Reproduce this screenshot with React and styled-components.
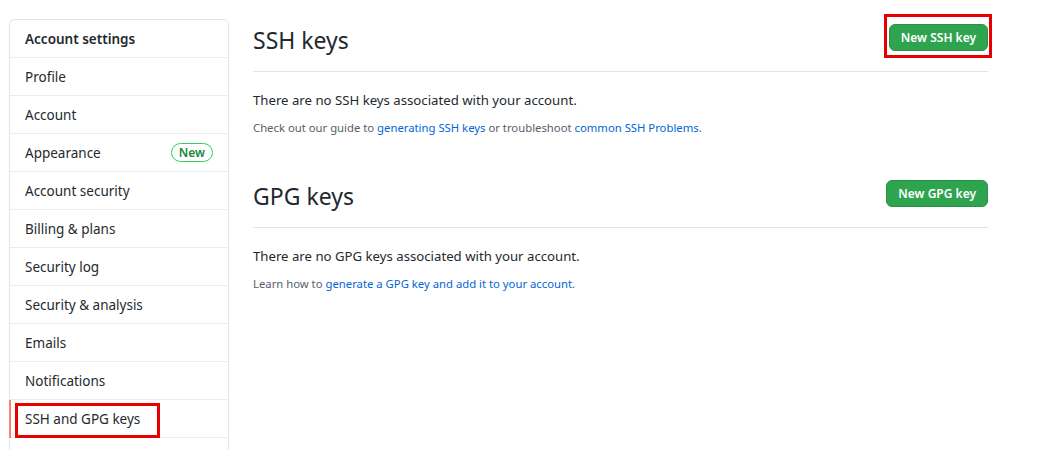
import React from "react";
import styled, { createGlobalStyle } from "styled-components";

const menu = [
    { label: "Profile" },
    { label: "Account" },
    { label: "Appearance", badge: "New" },
    { label: "Account security" },
    { label: "Billing & plans" },
    { label: "Security log" },
    { label: "Security & analysis" },
    { label: "Emails" },
    { label: "Notifications" },
    { label: "SSH and GPG keys", active: true },
];

const App = () => {
    return (
        <>
            <GlobalStyle />
            <Page>
                <Sidebar>
                    <SidebarHeader>Account settings</SidebarHeader>
                    {menu.map((item, idx) => (
                        <MenuItem key={idx} $active={item.active}>
                            <MenuLabel $marked={item.active}>{item.label}</MenuLabel>
                            {item.badge && <Badge>{item.badge}</Badge>}
                        </MenuItem>
                    ))}
                </Sidebar>
                <Main>
                    <Section>
                        <Subhead>
                            <Heading>SSH keys</Heading>
                            <ButtonWrap $marked>
                                <Button>New SSH key</Button>
                            </ButtonWrap>
                        </Subhead>
                        <Blank>There are no SSH keys associated with your account.</Blank>
                        <Note>
                            Check out our guide to <Link>generating SSH keys</Link> or troubleshoot{" "}
                            <Link>common SSH Problems</Link>.
                        </Note>
                    </Section>
                    <Section $second>
                        <Subhead>
                            <Heading>GPG keys</Heading>
                            <ButtonWrap>
                                <Button>New GPG key</Button>
                            </ButtonWrap>
                        </Subhead>
                        <Blank>There are no GPG keys associated with your account.</Blank>
                        <Note>
                            Learn how to <Link>generate a GPG key and add it to your account</Link>.
                        </Note>
                    </Section>
                </Main>
            </Page>
        </>
    );
};

const GlobalStyle = createGlobalStyle`
    html, body {
        margin: 0;
        padding: 0;
        overflow: hidden;
        background: #ffffff;
    }
    body {
        font-family: "Noto Sans", "Open Sans", sans-serif;
        color: #24292e;
    }
`;
const Page = styled.div`
    display: flex;
    align-items: flex-start;
    gap: 24px;
    padding: 19px 0 0 9px;
`;
const Sidebar = styled.nav`
    width: 220px;
    flex-shrink: 0;
    padding-bottom: 24px;
    border: 1px solid #e1e4e8;
    border-radius: 6px;
    box-sizing: border-box;
`;
const SidebarHeader = styled.div`
    height: 37px;
    display: flex;
    align-items: center;
    padding: 0 15px;
    font-size: 13.5px;
    font-weight: 600;
    border-bottom: 1px solid #eaecef;
`;
const MenuItem = styled.div`
    position: relative;
    height: 37px;
    display: flex;
    align-items: center;
    justify-content: space-between;
    padding: 0 15px;
    font-size: 13.5px;
    border-bottom: 1px solid #eaecef;

    &::before {
        content: "";
        display: ${(p) => (p.$active ? "block" : "none")};
        position: absolute;
        left: -1px;
        top: 0;
        bottom: -1px;
        width: 2px;
        background: #f9826c;
    }
`;
const MenuLabel = styled.span`
    position: relative;

    &::after {
        content: "";
        display: ${(p) => (p.$marked ? "block" : "none")};
        position: absolute;
        left: -10px;
        top: -7px;
        width: 145px;
        height: 35px;
        box-sizing: border-box;
        border: 3px solid #e60000;
    }
`;
const Badge = styled.span`
    font-size: 12px;
    font-weight: 600;
    color: #22863a;
    border: 1px solid #34d058;
    border-radius: 10px;
    padding: 0 7px;
    line-height: 17px;
`;
const Main = styled.main`
    width: 735px;
`;
const Section = styled.section`
    margin-top: ${(p) => (p.$second ? "41px" : "3px")};
`;
const Subhead = styled.div`
    display: flex;
    justify-content: space-between;
    align-items: flex-start;
    padding-bottom: 13px;
    border-bottom: 1px solid #e1e4e8;
    margin-bottom: 18px;
`;
const Heading = styled.h2`
    margin: 0;
    font-size: 23px;
    font-weight: 400;
    line-height: 36px;
`;
const ButtonWrap = styled.div`
    position: relative;
    margin-top: 2px;

    &::after {
        content: "";
        display: ${(p) => (p.$marked ? "block" : "none")};
        position: absolute;
        top: -10px;
        right: -4px;
        bottom: -7px;
        left: -5px;
        border: 3px solid #e60000;
    }
`;
const Button = styled.button`
    height: 27px;
    padding: 0 11px;
    font-family: inherit;
    font-size: 12px;
    font-weight: 600;
    color: #ffffff;
    background: #2ea44f;
    border: 1px solid #2a9147;
    border-radius: 6px;
`;
const Blank = styled.p`
    margin: 0 0 8px;
    font-size: 13.2px;
    line-height: 21px;
`;
const Note = styled.p`
    margin: 0;
    font-size: 11.3px;
    line-height: 18px;
    color: #586069;
`;
const Link = styled.a`
    color: #0366d6;
    text-decoration: none;
`;

export default App;
